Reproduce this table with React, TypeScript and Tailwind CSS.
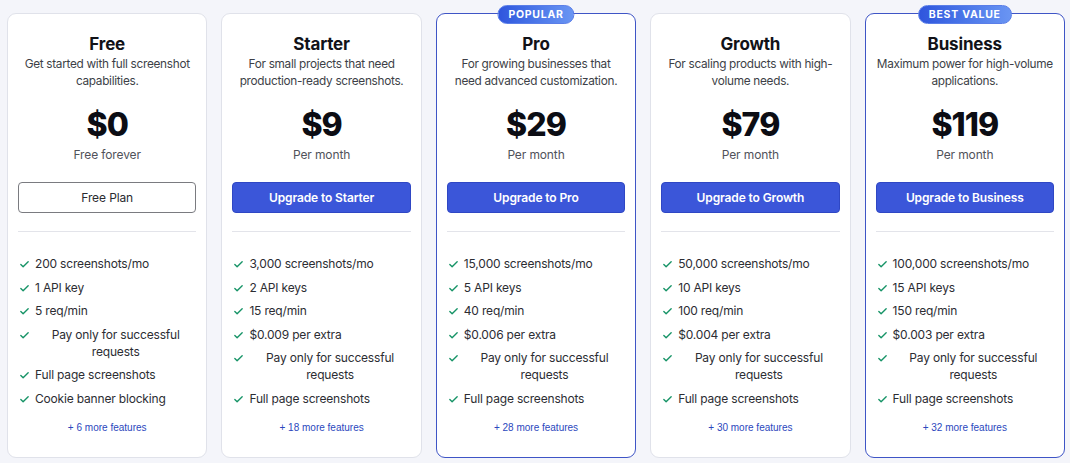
import { Check } from 'lucide-react'

type Plan = {
  name: string
  desc: string
  price: string
  period: string
  cta: string
  primary: boolean
  badge?: string
  features: string[]
  more: number
}

const plans: Plan[] = [
  {
    name: 'Free',
    desc: 'Get started with full screenshot capabilities.',
    price: '$0',
    period: 'Free forever',
    cta: 'Free Plan',
    primary: false,
    features: [
      '200 screenshots/mo',
      '1 API key',
      '5 req/min',
      'Pay only for successful requests',
      'Full page screenshots',
      'Cookie banner blocking',
    ],
    more: 6,
  },
  {
    name: 'Starter',
    desc: 'For small projects that need production-ready screenshots.',
    price: '$9',
    period: 'Per month',
    cta: 'Upgrade to Starter',
    primary: true,
    features: [
      '3,000 screenshots/mo',
      '2 API keys',
      '15 req/min',
      '$0.009 per extra',
      'Pay only for successful requests',
      'Full page screenshots',
    ],
    more: 18,
  },
  {
    name: 'Pro',
    desc: 'For growing businesses that need advanced customization.',
    price: '$29',
    period: 'Per month',
    cta: 'Upgrade to Pro',
    primary: true,
    badge: 'POPULAR',
    features: [
      '15,000 screenshots/mo',
      '5 API keys',
      '40 req/min',
      '$0.006 per extra',
      'Pay only for successful requests',
      'Full page screenshots',
    ],
    more: 28,
  },
  {
    name: 'Growth',
    desc: 'For scaling products with high-volume needs.',
    price: '$79',
    period: 'Per month',
    cta: 'Upgrade to Growth',
    primary: true,
    features: [
      '50,000 screenshots/mo',
      '10 API keys',
      '100 req/min',
      '$0.004 per extra',
      'Pay only for successful requests',
      'Full page screenshots',
    ],
    more: 30,
  },
  {
    name: 'Business',
    desc: 'Maximum power for high-volume applications.',
    price: '$119',
    period: 'Per month',
    cta: 'Upgrade to Business',
    primary: true,
    badge: 'BEST VALUE',
    features: [
      '100,000 screenshots/mo',
      '15 API keys',
      '150 req/min',
      '$0.003 per extra',
      'Pay only for successful requests',
      'Full page screenshots',
    ],
    more: 32,
  },
]

function PlanCard({ plan }: { plan: Plan }) {
  return (
    <div
      className={`relative flex flex-col rounded-[9px] border bg-white px-[10px] pt-[18px] pb-[22px] text-center ${
        plan.badge ? 'border-[#3f55c6]' : 'border-[#e0e2ea]'
      }`}
    >
      {plan.badge && (
        <span className="absolute left-1/2 top-[-9px] -translate-x-1/2 whitespace-nowrap rounded-full border border-[#5a7ee8] bg-gradient-to-r from-[#2f55dd] to-[#6a95f3] px-[10px] text-[10.5px] font-bold leading-[17px] tracking-[0.07em] text-white">
          {plan.badge}
        </span>
      )}
      <h3 className="text-[17px] font-bold leading-[24px] tracking-[-0.01em] text-[#111218]">{plan.name}</h3>
      <p className="text-[11.8px] leading-[17px] tracking-[-0.025em] text-[#3d3f47]">{plan.desc}</p>
      <div className="mt-[15px] text-[32px] font-extrabold leading-[40px] tracking-[-0.03em] text-[#0c0d14]">
        {plan.price}
      </div>
      <div className="mt-[1px] text-[12px] leading-[17px] tracking-[-0.01em] text-[#50525a]">{plan.period}</div>
      <button
        className={`mt-[19px] h-[31px] rounded-[4px] text-[12px] tracking-[-0.01em] ${
          plan.primary
            ? 'border border-[#2f47c4] bg-[#3b56d9] font-semibold text-white'
            : 'border border-[#7a7b80] bg-white text-[#2a2b30]'
        }`}
      >
        {plan.cta}
      </button>
      <div className="mt-[18px] h-px bg-[#e3e4ea]" />
      <ul className="mt-[23px] flex flex-col gap-[6.5px]">
        {plan.features.map(f => (
          <li key={f} className="flex items-start gap-[5px] pl-[1px]">
            <Check className="mt-[4px] h-[11px] w-[11px] shrink-0 text-[#179467]" strokeWidth={3} />
            <span className="text-[12px] leading-[17px] tracking-[-0.015em] text-[#2c2d33]">{f}</span>
          </li>
        ))}
      </ul>
      <div className="mt-[14px] font-['Liberation_Sans',Arial,sans-serif] text-[10px] leading-[14px] text-[#2b47bd]">
        + {plan.more} more features
      </div>
    </div>
  )
}

export default function App() {
  return (
    <div className="min-h-[463px] bg-[#f4f5fa] pt-[13px] pl-[7px] pr-[5px] font-['Inter',sans-serif]">
      <div className="grid grid-cols-5 gap-[14px]">
        {plans.map(p => (
          <PlanCard key={p.name} plan={p} />
        ))}
      </div>
    </div>
  )
}
